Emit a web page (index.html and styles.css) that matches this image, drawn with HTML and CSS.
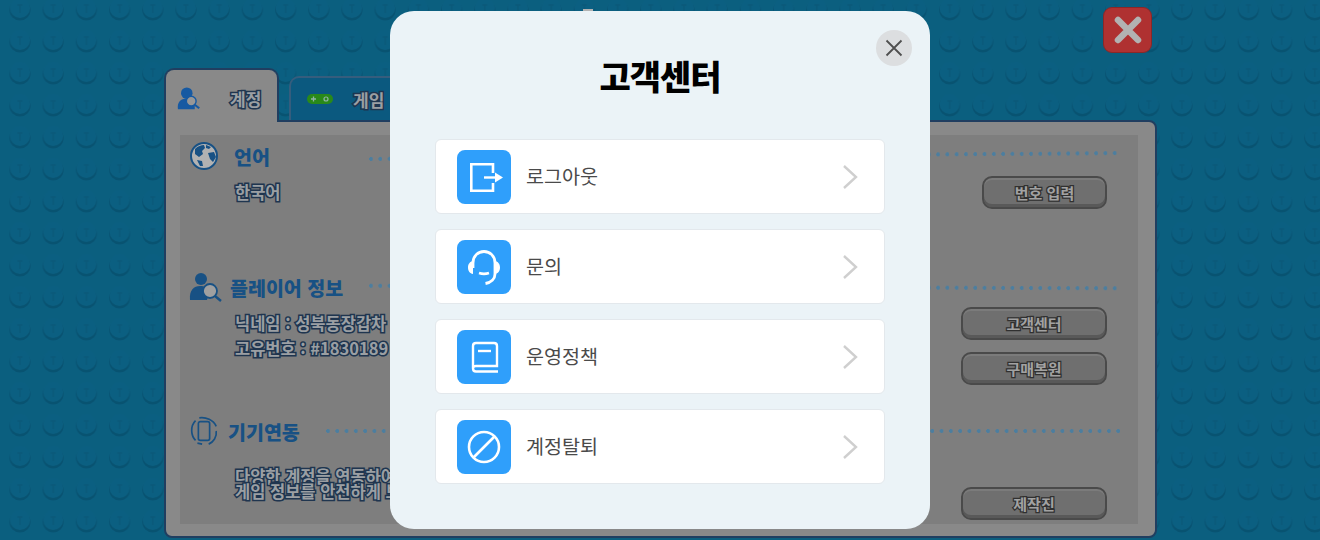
FILE: index.html
```html
<!DOCTYPE html>
<html lang="ko">
<head>
  <meta charset="UTF-8">
  <meta name="viewport" content="width=device-width,initial-scale=1">
  <title>고객센터</title>
  <link rel="stylesheet" href="styles.css">
</head>
<body>
<div class="scene">
  <svg class="studs" width="1320" height="540" aria-hidden="true">
    <defs>
      <pattern id="stud" x="3.5" y="-8" width="33.2" height="32" patternUnits="userSpaceOnUse">
        <circle cx="16.5" cy="18" r="10.5" fill="#0c77a3"/>
        <circle cx="16.5" cy="16" r="10" fill="#1189b9"/>
        <path d="M14 13h5M16.500 13v8" stroke="#0f80ae" stroke-width="1.400" fill="none"/>
      </pattern>
    </defs>
    <rect width="1320" height="540" fill="url(#stud)"/>
  </svg>

  <button class="exit-btn" aria-label="닫기">
    <svg width="30" height="30" viewBox="0 0 30 30"><path d="M5 5l20 20M25 5L5 25" stroke="#fff" stroke-width="6.500" stroke-linecap="round"/></svg>
  </button>
  <div class="top-tick"></div>

  <div class="window">
    <div class="tabs">
      <div class="tab active">
        <svg width="24" height="25" viewBox="0 0 27 26"><circle cx="11" cy="7" r="6.500" fill="#2080e8"/><path d="M1 25c-1-8 3-12 10-12s9 3 9 6v6z" fill="#2080e8"/><circle cx="16" cy="16" r="5.500" fill="#d8d8d8" stroke="#2080e8" stroke-width="1.600"/><path d="M20 20l5 4" stroke="#2080e8" stroke-width="2.400"/></svg>
        <span class="outlined">계정</span>
      </div>
      <div class="tab">
        <svg width="26" height="14" viewBox="0 0 26 14"><rect x="0" y="2" width="26" height="10" rx="5" fill="#3cc525"/><path d="M4 7h5M6.500 4.500v5" stroke="#cfe" stroke-width="1.300"/><circle cx="19" cy="7" r="2" fill="none" stroke="#cfe" stroke-width="1.200"/></svg>
        <span class="outlined">게임</span>
      </div>
    </div>
    <div class="panel">
      <div class="inner">

        <section class="sec sec-lang">
          <div class="sec-head">
            <svg class="sec-icon" width="30" height="30" viewBox="0 0 30 30"><circle cx="15" cy="15" r="13" fill="#fff" stroke="#2374bd" stroke-width="2"/><path d="M6 8c3-3 6-4 9-4l1 3-3 3 1 3-4 3-4-3zM19 12l6-1 2 5-3 5-3-3zM8 19l5 1 1 5-3 0zM17 4l5 2-2 2-3-1z" fill="#2374bd"/></svg>
            <h2>언어</h2>
            <div class="dots tilt-up"></div>
          </div>
          <div class="sec-body">
            <div class="sec-text"><p class="outlined">한국어</p></div>
            <div class="sec-btns short"><button class="game-btn">번호 입력</button></div>
          </div>
        </section>

        <section class="sec sec-player">
          <div class="sec-head">
            <svg class="sec-icon" width="33" height="30" viewBox="0 0 33 30"><circle cx="12" cy="7" r="6" fill="#2374bd"/><path d="M1 28c-1-10 4-14 10-14s8 2 9 6l-2 8z" fill="#2374bd"/><circle cx="21" cy="19" r="7" fill="#e6e6e6" stroke="#2374bd" stroke-width="1.800"/><path d="M26 24l6 5" stroke="#2374bd" stroke-width="2.400"/></svg>
            <h2>플레이어 정보</h2>
            <div class="dots tilt-down"></div>
          </div>
          <div class="sec-body">
            <div class="sec-text lines">
              <p class="outlined">닉네임 : 성북동장갑차</p>
              <p class="outlined">고유번호 : #1830189</p>
            </div>
            <div class="sec-btns">
              <button class="game-btn">고객센터</button>
              <button class="game-btn">구매복원</button>
            </div>
          </div>
        </section>

        <section class="sec sec-device">
          <div class="sec-head">
            <svg class="sec-icon" width="30" height="30" viewBox="0 0 32 32" fill="none" stroke="#2374bd" stroke-width="1.800"><rect x="10" y="6" width="12" height="20" rx="2"/><path d="M7 26C2 21 1 11 7 5M11 2c7-1 15 2 18 9M29 16c1 6-3 12-8 14M9 29l5 1"/></svg>
            <h2>기기연동</h2>
            <div class="dots"></div>
          </div>
          <div class="sec-body bottom">
            <div class="sec-text tight">
              <p class="outlined">다양한 계정을 연동하여</p>
              <p class="outlined">게임 정보를 안전하게 보관</p>
            </div>
            <div class="sec-btns"><button class="game-btn">제작진</button></div>
          </div>
        </section>

      </div>
    </div>
  </div>

  <div class="overlay">
    <div class="modal">
      <button class="close" aria-label="닫기">
        <svg width="20" height="20" viewBox="0 0 20 20"><path d="M2.500 2.500l15 15M17.500 2.500l-15 15" stroke="#4f4f4f" stroke-width="1.800"/></svg>
      </button>
      <h1>고객센터</h1>
      <ul class="menu">
        <li class="menu-row">
          <span class="ico">
            <svg width="40" height="40" viewBox="0 0 40 40" fill="none" stroke="#fff" stroke-width="2.600"><path d="M29 16V7.300H7.300v26.400H29V26"/><path d="M20 20.500h13" stroke-width="2.400"/><path d="M31 15.500l8 5-8 5z" fill="#fff" stroke="none"/></svg>
          </span>
          <span class="label">로그아웃</span>
          <svg class="chev" width="16" height="26" viewBox="0 0 16 26"><path d="M2 2l12 11L2 24" fill="none" stroke="#cfcfcf" stroke-width="2.400"/></svg>
        </li>
        <li class="menu-row">
          <span class="ico">
            <svg width="40" height="40" viewBox="0 0 40 40" fill="none" stroke="#fff" stroke-width="2.800"><path d="M9 21v-5C9 9 14 4.500 20 4.500S31 9 31 16v11c0 5-4 8.500-9.500 9.500"/><path d="M9 14c-3 .5-5 3-5 6.500s2 6 5 6.500zM31 14c3 .5 5 3 5 6.500s-2 6-5 6.500z" fill="#fff" stroke="none"/><path d="M15 26c3 1 7 1 10 0" stroke-width="2.600"/></svg>
          </span>
          <span class="label">문의</span>
          <svg class="chev" width="16" height="26" viewBox="0 0 16 26"><path d="M2 2l12 11L2 24" fill="none" stroke="#cfcfcf" stroke-width="2.400"/></svg>
        </li>
        <li class="menu-row">
          <span class="ico">
            <svg width="40" height="40" viewBox="0 0 40 40" fill="none" stroke="#fff" stroke-width="2.400"><path d="M9 31V9c0-2 1-3 3-3h18c2 0 3 1 3 3v20H12c-2 0-3 1-3 2.500S10 34.500 12 34.500h22"/><path d="M14 14h13"/></svg>
          </span>
          <span class="label">운영정책</span>
          <svg class="chev" width="16" height="26" viewBox="0 0 16 26"><path d="M2 2l12 11L2 24" fill="none" stroke="#cfcfcf" stroke-width="2.400"/></svg>
        </li>
        <li class="menu-row">
          <span class="ico">
            <svg width="40" height="40" viewBox="0 0 40 40" fill="none" stroke="#fff" stroke-width="2.600"><circle cx="20" cy="20" r="15"/><path d="M9.500 30.500l21-21"/></svg>
          </span>
          <span class="label">계정탈퇴</span>
          <svg class="chev" width="16" height="26" viewBox="0 0 16 26"><path d="M2 2l12 11L2 24" fill="none" stroke="#cfcfcf" stroke-width="2.400"/></svg>
        </li>
      </ul>
    </div>
  </div>
</div>
</body>
</html>
```

FILE: styles.css
```css
* { box-sizing: border-box; margin: 0; padding: 0 }
body {
  width: 1320px;
  height: 540px;
  overflow: hidden;
  font-family: "Noto Sans CJK KR", "Noto Sans", sans-serif;
}
button { font-family: inherit; }

/* game screen behind the popup */
.scene {
  position: relative;
  width: 1320px;
  height: 540px;
  background: #1088b7;
  padding: 68px 163px 0 164px;
}
.studs { position: absolute; left: 0; top: 0 }
.exit-btn {
  position: absolute;
  left: 1103px;
  top: 7px;
  width: 49px;
  height: 46px;
  display: flex;
  align-items: center;
  justify-content: center;
  background: #fb4747;
  border: 1px solid #c83838;
  border-radius: 9px;
}
.top-tick {
  position: absolute;
  left: 583px;
  top: 9px;
  width: 10px;
  height: 3px;
  background: #fff;
}
.window { position: relative; width: 993px }
.tabs { display: flex; gap: 10px; height: 52px; align-items: flex-end }
.tab {
  display: flex;
  align-items: center;
  gap: 20px;
  height: 44px;
  width: 140px;
  padding-left: 16px;
  background: #1180b7;
  border: 2px solid #4c86b4;
  border-bottom: 0;
  border-radius: 10px 10px 0 0;
  font-size: 17px;
  font-weight: 700;
}
.tab.active {
  width: 115px;
  height: 54px;
  gap: 29px;
  margin-bottom: -2px;
  padding: 4px 0 0 11px;
  position: relative;
  z-index: 1;
  background: #c5c5c5;
  border: 2px solid #2f5a8a;
  border-bottom: 0;
}
.panel {
  height: 418px;
  padding: 13px 17px 12px 14px;
  background: #c5c5c5;
  border: 2px solid #2f5a8a;
  border-radius: 0 8px 8px 8px;
}
.inner {
  height: 389px;
  background: #b5b5b5;
  display: flex;
  flex-direction: column;
}
.sec { display: flex; flex-direction: column; padding: 5px 16px 0 9px }
.sec-lang { height: 131px }
.sec-player { height: 144px }
.sec-device { flex: 1; padding-bottom: 4px }
.sec-head { display: flex; align-items: center; height: 32px }
.sec-head h2 {
  font-size: 19.500px;
  font-weight: 900;
  color: #2374bd;
  white-space: nowrap;
  margin-left: 8px;
}
.sec-lang h2 { margin-left: 15px }
.sec-device h2 { margin-left: 9px }
.sec-icon { flex: none }
.dots {
  flex: 1;
  height: 4px;
  margin-left: 26px;
  background: radial-gradient(circle at 2px 2px, #6eb5e4 0 1.700px, transparent 2.200px) 0 0 / 9.300px 4px repeat-x;
}
.sec-lang .dots { margin-left: 99px }
.dots.tilt-up { transform: rotate(-0.45deg) }
.dots.tilt-down { transform: rotate(0.2deg) }
.sec-body { flex: 1; display: flex; justify-content: space-between; padding-right: 15px }
.sec-body.bottom { align-items: flex-end }
.sec-text { padding: 8px 0 0 46px; font-size: 16.500px; font-weight: 700; line-height: 25px }
.sec-text.lines { padding-top: 8px }
.sec-text.tight { line-height: 15px; padding-bottom: 21px }
.outlined {
  color: #dfe4ea;
  white-space: nowrap;
  -webkit-text-stroke: 3px #2d4c72;
  paint-order: stroke fill;
}
.sec-btns { display: flex; flex-direction: column; gap: 12px; padding-top: 4px; width: 146px }
.sec-btns.short { width: 125px }
.game-btn {
  height: 33px;
  background: #9f9f9f;
  border: 2px solid #6a6a6a;
  border-radius: 10px;
  box-shadow: inset 0 2px 0 #b0b0b0, inset 0 -3px 0 #808080;
  font-size: 15px;
  font-weight: 700;
  color: #e8e8e8;
  -webkit-text-stroke: 2.500px #454545;
  paint-order: stroke fill;
}

/* popup */
.overlay {
  position: absolute;
  left: 0;
  top: 0;
  z-index: 5;
  width: 1320px;
  height: 540px;
  background: rgba(0, 0, 0, .3);
  display: flex;
  align-items: center;
  justify-content: center;
}
.modal {
  position: relative;
  width: 540px;
  height: 518px;
  padding: 38px 45px 0;
  background: #ebf3f7;
  border-radius: 24px;
}
.close {
  position: absolute;
  right: 18px;
  top: 19px;
  width: 36px;
  height: 36px;
  display: flex;
  align-items: center;
  justify-content: center;
  border: 0;
  border-radius: 50%;
  background: #dcdee0;
}
.modal h1 {
  height: 90px;
  text-align: center;
  font-size: 34px;
  line-height: 54px;
  font-weight: 900;
  color: #000;
  letter-spacing: -1px;
}
.menu { list-style: none; display: flex; flex-direction: column; gap: 15px }
.menu-row {
  display: flex;
  align-items: center;
  height: 75px;
  padding: 0 26px 0 21px;
  background: #fff;
  border: 1px solid #e3e8ec;
  border-radius: 6px;
}
.ico {
  flex: none;
  width: 54px;
  height: 54px;
  display: flex;
  align-items: center;
  justify-content: center;
  background: #2f9ffb;
  border-radius: 8px;
}
.label { flex: 1; margin: -2px 0 0 15px; font-size: 19.600px; color: #4a4a4a; }
.chev { flex: none }
```
